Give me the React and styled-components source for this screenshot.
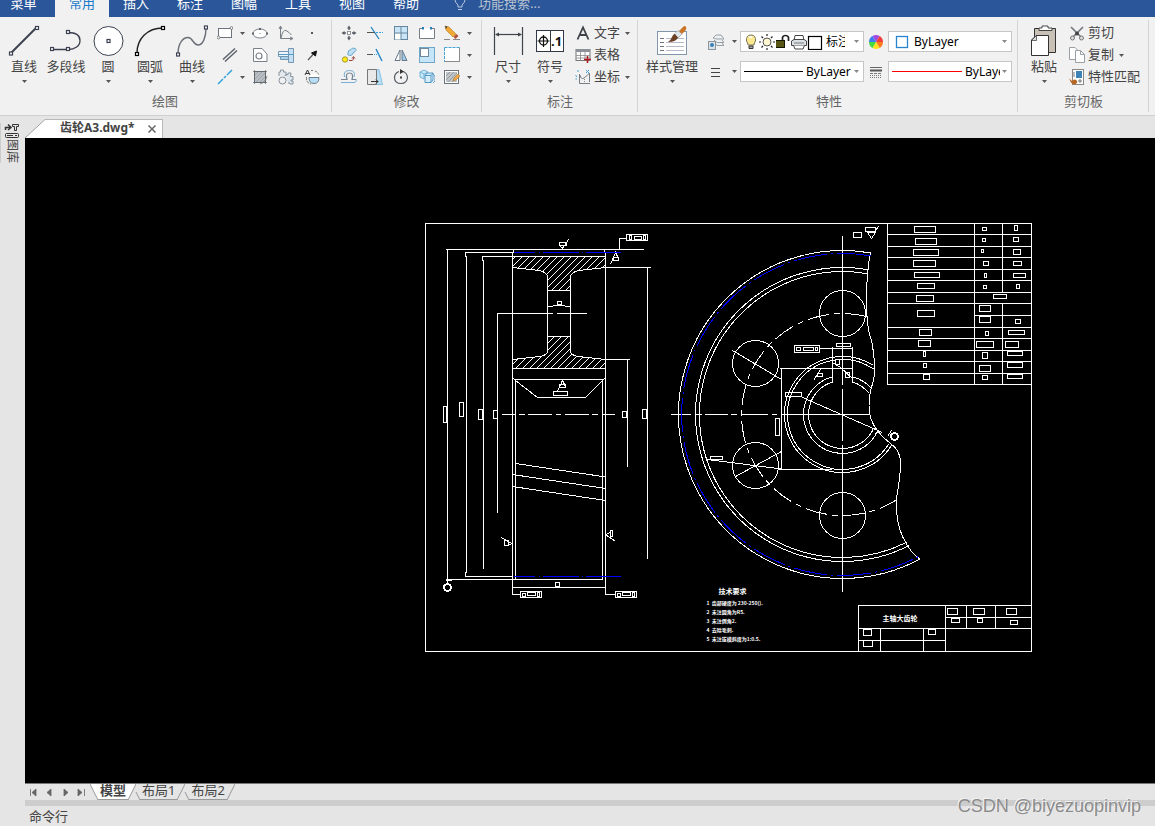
import { useState } from 'react';
import styled, { createGlobalStyle } from 'styled-components';

/* ---------- large icons, 32 x 32 ---------- */

const Node = ({ x, y, color = '#3c4150' }) => (
  <rect x={x - 1.5} y={y - 1.5} width='3' height='3' fill='#fff' stroke={color} strokeWidth='1.2' />
);

const largeIcons = {
  line: (
    <>
      <path d='M3 28L28 3' stroke='#3c4150' strokeWidth='2' />
      <Node x={3} y={28.5} />
      <Node x={29} y={3} />
    </>
  ),
  polyline: (
    <>
      <path d='M2 24.5H18C25 24.5 30 21 30 15.5S26 7.5 18 7.5' stroke='#3c4150' strokeWidth='1.3' />
      <Node x={2} y={24} />
      <Node x={18} y={24} />
      <Node x={18} y={7} />
    </>
  ),
  circle: (
    <>
      <circle cx='16.500' cy='16' r='14.5' fill='#fff' stroke='#3c4150' />
      <Node x={16.5} y={16} />
    </>
  ),
  arc: (
    <>
      <path d='M3 28C3 14 13 3 29 3' stroke='#222' strokeWidth='1.4' />
      <Node x={3} y={29} color='#000' />
      <Node x={29} y={3} color='#000' />
    </>
  ),
  curve: (
    <>
      <path d='M2 29C2 18 7 12.5 12 12.5S17 20 22 20S30 12 30 3' stroke='#6b6f78' strokeWidth='1.4' />
      <Node x={2} y={29.5} />
      <Node x={30} y={2.5} />
    </>
  ),
  dimension: (
    <>
      <path d='M2.5 2V30M30.5 2V30' stroke='#3f444c' strokeWidth='1.2' />
      <path d='M4 9.5H29' stroke='#3f444c' strokeWidth='1.2' />
      <path d='M3 9.5L7 7.5V11.5ZM30 9.5L26 7.5V11.5Z' fill='#3f444c' />
    </>
  ),
  symbol: (
    <>
      <rect x='2.5' y='5.5' width='27' height='21' fill='#fff' stroke='#333846' />
      <path d='M16.5 5V27' stroke='#333846' />
      <circle cx='9.5' cy='16' r='4' stroke='#111' strokeWidth='1.3' />
      <path d='M3.5 16H15.5M9.5 10V22' stroke='#111' strokeWidth='1.2' />
      <text x='17' y='21' fontFamily='Noto Sans' fontSize='13' fontWeight='700' fill='#111'>.1</text>
    </>
  ),
  style: (
    <>
      <rect x='1.5' y='6.5' width='29' height='23' fill='#fff' stroke='#8296ab' />
      <path d='M4 13.5H8M4 17.5H8M4 21.5H8M4 25.5H8' stroke='#6b7480' />
      <path d='M10 13.5H28M10 17.5H28M10 21.5H28M10 25.5H28' stroke='#b5bac8' />
      <path d='M18 11L27 2Q29 0 30 2Q31 4 28 7L22 13Z' fill='#c97524' />
      <path d='M18 9L22 5.500L26 9L22 13Z' fill='#dfe4e8' stroke='#8b949b' strokeWidth='.5' />
      <path d='M12 17Q15 15 16 12Q17 9 19 9L22 12.500Q20 17 12 17Z' fill='#6b4025' />
    </>
  ),
  paste: (
    <>
      <path d='M6.500 3.500H27.500V27.500H6.500Z' fill='#c9c1b5' stroke='#333' />
      <path d='M11 5.500V3H14V1H20V3H24V5.500Z' fill='#fff' stroke='#333' strokeWidth='.9' />
      <path d='M8 10.500H20.500V30.500H3.500V15Z' fill='#fff' stroke='#333' />
      <path d='M8.500 10.500V15.500H3.500Z' fill='#ddd' stroke='#333' strokeWidth='.7' />
    </>
  ),
};

/* ---------- small icons, 16 x 16 ---------- */

const smallIcons = {
  rect: (
    <>
      <rect x='1.500' y='3.500' width='13' height='9' fill='#fff' stroke='#6d737c' />
      <circle cx='14.500' cy='3' r='1.400' fill='#fff' stroke='#555' strokeWidth='.7' />
      <circle cx='1.500' cy='12.500' r='1.400' fill='#fff' stroke='#555' strokeWidth='.7' />
    </>
  ),
  ellipse: (
    <>
      <ellipse cx='8' cy='8.500' rx='7' ry='4.500' fill='#fff' stroke='#7b818a' />
      <path d='M7 3H9V5H7ZM0 7.500H2V9.500H0ZM14 7.500H16V9.500H14Z' fill='#60666e' />
      <path d='M8 8V9' stroke='#777' />
    </>
  ),
  graph: (
    <>
      <path d='M2.500 1.500V13.500H15M1 4L2.500 1L4 4M12 12L15 13.500L12 15' stroke='#777d85' />
      <path d='M3 13Q5 4 8 5.500T13.500 10' stroke='#777d85' />
    </>
  ),
  dot: <rect x='7' y='7' width='2' height='2' fill='#53575e' />,
  parallel: <path d='M1 12.500L13 1.500M3 14.500L15 3.500' stroke='#5e646c' strokeWidth='1.500' />,
  hole: (
    <>
      <path d='M1.500 1.500H10L15 7V14.500H1.500Z' fill='#fff' stroke='#7b818a' />
      <circle cx='7' cy='9' r='3' stroke='#7b818a' strokeWidth='1.200' />
    </>
  ),
  shaft: (
    <>
      <path d='M.5 4.500H10.500V9.500H.5Z' fill='#eef6fc' stroke='#7796ae' />
      <path d='M2.500 9.500H10.500V12.500H2.500Z' fill='#a8d3ef' stroke='#7796ae' />
      <path d='M10.500 1.500H15.500V15.500H10.500Z' fill='#c3e0f4' stroke='#7796ae' />
      <path d='M0 7.500H16' stroke='#579bc8' />
    </>
  ),
  arrow: (
    <>
      <path d='M4 13L9 7.500' stroke='#555' strokeWidth='1.200' />
      <path d='M12.500 4L11.500 9L7.500 6Z' fill='#111' stroke='#111' />
    </>
  ),
  blueLine: <path d='M1 15L6 10M7 9L9 7M10 6L15 1' stroke='#31a4dc' strokeWidth='1.500' />,
  hatch: (
    <>
      <rect x='2.500' y='2.500' width='11' height='11' fill='#b9bfc4' stroke='#61686f' />
      <path d='M1 2.500H15M1 13.500H15M2.500 1V15M13.500 1V15' stroke='#61686f' strokeWidth='.7' />
      <path d='M3 6L6 3M3 10L10 3M4 13L13 4M8 13L13 8' stroke='#8f979e' strokeWidth='.7' />
      <path d='M15 7Q14 13 8 15' stroke='#777' strokeWidth='.8' />
    </>
  ),
  gear: (
    <>
      <path d='M1 7V3H2.500V1H5.500V3H8V6L6.500 7' fill='#e4e9ee' stroke='#8b96a1' />
      <path d='M8 7V5.500H10V4H13V5.500H12.500V7.500H15V11H13V12H15V15H12V14H10' fill='#dce4ec' stroke='#8b96a1' />
      <circle cx='4.500' cy='11.500' r='3.500' fill='#f1f1f1' stroke='#84909b' />
    </>
  ),
  section: (
    <>
      <path d='M1 6L3.500 1L6 6M2 4.500H5' stroke='#333' />
      <path d='M7 1.500H10M11 2Q14 3 15 6' stroke='#777' strokeDasharray='2 1' />
      <circle cx='10' cy='9.500' r='5' fill='#fff' />
      <path d='M5 8.500H15Q15 14.500 10 14.500T5 8.500Z' fill='#b7def5' stroke='#6e7f8c' />
      <path d='M2.500 8Q2 14 7 15' stroke='#777' strokeDasharray='3 1' />
    </>
  ),
  move: (
    <>
      <path d='M8 2V5M8 11V14M2 8H5M11 8H14' stroke='#555b63' strokeWidth='1.400' />
      <path d='M8 .5L10 3.500H6ZM8 15.500L10 12.500H6ZM.5 8L3.500 6V10ZM15.500 8L12.500 6V10Z' fill='#555b63' />
      <rect x='6.500' y='6.500' width='3' height='3' fill='#fff' stroke='#7a8087' strokeWidth='.8' />
    </>
  ),
  trim: (
    <>
      <path d='M4 2L12 14' stroke='#1f83c4' strokeWidth='1.300' />
      <path d='M0 7.500H8' stroke='#555' />
      <path d='M9 7.500H16' stroke='#3aa0dc' strokeDasharray='2 1' />
    </>
  ),
  array: (
    <>
      <rect x='1.500' y='1.500' width='13' height='13' fill='#c8e6f8' stroke='#66869d' />
      <rect x='2' y='8.500' width='6' height='6' fill='#fff' />
      <path d='M8 1V15M1 8H15' stroke='#66869d' />
    </>
  ),
  breakIcon: (
    <>
      <path d='M4 3.500H.5V13.500H15.500V3.500H12' fill='#fff' stroke='#767d85' />
      <path d='M3 2H5V4.500H3ZM11 2H13V4.500H11Z' fill='#2580c0' />
    </>
  ),
  erase: (
    <>
      <path d='M1 1L5 2L12 9L9 12L2 5Z' fill='#f3aa35' stroke='#b07a2b' strokeWidth='.6' />
      <path d='M1 1L3.500 1.500L2 4Z' fill='#444' />
      <path d='M9.500 12L12.500 9L14.500 11L11.500 14Z' fill='#b3523c' />
      <path d='M0 14.500H6M9 14.500H16' stroke='#888' />
    </>
  ),
  copyIcon: (
    <>
      <path d='M7 6Q7 3 10 2.500Q11 0 14 1.500T12 6Q11 9 8.500 8.500T7 6Z' fill='#c0e1f5' stroke='#64a4cc' />
      <circle cx='4' cy='12.500' r='2.700' fill='#ffeb19' stroke='#8b832d' strokeWidth='.8' />
      <path d='M8 13.500H11Q13 13 12.500 10.500M11 11.500L12.500 9.500L14 11.500' stroke='#a0403a' />
    </>
  ),
  extend: (
    <>
      <path d='M9 2L15 14' stroke='#1f83c4' strokeWidth='1.400' />
      <path d='M0 7.500H6' stroke='#555' />
      <path d='M7 7.500H12' stroke='#3aa0dc' strokeDasharray='1 1' />
    </>
  ),
  mirror: (
    <>
      <path d='M7 3V13.500H2Z' fill='#fff' stroke='#687888' />
      <path d='M9 3V13.500H14Z' fill='#9dcbea' stroke='#687888' />
    </>
  ),
  scale: (
    <>
      <rect x='.5' y='.5' width='15' height='15' fill='#c5e6f9' stroke='#72a6c9' />
      <rect x='1.500' y='1.500' width='8' height='8' fill='#fff' stroke='#72889b' />
    </>
  ),
  dashRect: (
    <>
      <rect x='.5' y='.5' width='15' height='14' fill='#fff' stroke='#8b8b8b' />
      <path d='M.5 .5H15.500M.5 1V15' stroke='#f1f1f1' />
      <path d='M.5 .5H15.500M.5 1V15' stroke='#46a4da' strokeDasharray='3 1' />
    </>
  ),
  offset: (
    <>
      <path d='M0 10.500H6Q4 4 8.500 4T11 10.500H15' stroke='#778491' strokeWidth='1.200' />
      <path d='M0 13.500H14Q16 12 15 10M3.500 8Q2 1.500 8.500 1.500T13 8' stroke='#6aa6cf' strokeWidth='.9' />
    </>
  ),
  stretch: (
    <>
      <path d='M8 .5H12L15.500 15.500H8Z' fill='#b8dff4' stroke='#8ac1e2' />
      <path d='M.5 .5H9.500V15.500H.5Z' fill='#e8e8e8' stroke='#777' />
      <path d='M4 12.500H11M9 10.500L11 12.500L9 14.500' stroke='#333' />
    </>
  ),
  rotate: (
    <>
      <path d='M6 2.500Q1.500 4 1.500 9Q2 14.500 8 14.500T14.500 8.500Q14 3 9 2.500' stroke='#555b63' strokeWidth='1.200' />
      <path d='M7 0L11 2.500L7 5Z' fill='#333' />
      <rect x='7' y='7.500' width='2' height='2' fill='#444' />
    </>
  ),
  explode: (
    <>
      <path d='M1 3L5 1L9 3L5 5ZM1 3V8L5 10V5' fill='#c9e9fa' stroke='#5ba3cf' strokeWidth='.8' />
      <path d='M6 6.500H12V13.500H6ZM6 6.500L8 4H14L12 6.500M14 4V11L12 13.500' fill='#d6eefb' stroke='#418fc0' strokeWidth='.9' />
      <path d='M14 5L16 7V12L14 14' stroke='#5ba3cf' />
    </>
  ),
  hatchEdit: (
    <>
      <rect x='.5' y='1.500' width='14' height='13' fill='#fff' stroke='#6d737a' />
      <rect x='2' y='3' width='11' height='10' fill='#c1c5c8' />
      <path d='M2 7L6 3M2 11L10 3M4 13L13 4M8 13L13 8' stroke='#858c92' strokeWidth='.7' />
      <path d='M9 12L10 9L14 5L16 7L12 11Z' fill='#efaa45' stroke='#a06d27' strokeWidth='.5' />
    </>
  ),
  text: <path d='M2.500 14.500L8 2.500L13.500 14.500M4.500 10H11.500' stroke='#3f444a' strokeWidth='1.800' />,
  table: (
    <>
      <rect x='1' y='2.500' width='14' height='11' fill='#fff' stroke='#777' />
      <path d='M1 2H15V5H1Z' fill='#8c9197' />
      <path d='M1 8.500H15M1 11H15M5.500 5V14M10 5V14' stroke='#888' strokeWidth='.8' />
      <path d='M12.500 9V16M9 12.500H16' stroke='#b01c24' strokeWidth='1.600' />
    </>
  ),
  coord: (
    <>
      <path d='M4.500 5V14.500H15M5 6Q6 11 9 9T14.500 4V13' stroke='#777d84' />
      <path d='M3 1V3M11 1L14 4M14 1L11 4M.5 6L2 8M.5 10H2' stroke='#49a2d8' />
      <path d='M9.500 8V14' stroke='#888' strokeDasharray='1 1' />
    </>
  ),
  layers: (
    <>
      <path d='M5 4L8 1H13L16 5H9ZM6 6L9 8.500H16L14 6M8 10L9 11.500H16L14 9' fill='#eef1f3' stroke='#8e969d' strokeWidth='.9' />
      <rect x='.5' y='7.500' width='7' height='8' fill='#dae3ea' stroke='#8e969d' />
      <circle cx='4' cy='11' r='2' fill='#3b82b8' />
    </>
  ),
  weight: <path d='M3 4.500H12M3 8.500H12M3 12.500H12' stroke='#444' strokeWidth='1.200' />,
  bulb: (
    <>
      <path d='M5 11Q5 9 3.500 7Q3 1 8 1T12.500 7Q11 9 11 11Z' fill='#ffe990' stroke='#77735c' />
      <path d='M6 3.500Q8 2 9 4' stroke='#fff' strokeWidth='1.500' />
      <path d='M6 12V14.500H10V12Z' fill='#aaa' stroke='#333' />
    </>
  ),
  sun: (
    <>
      <circle cx='8' cy='8' r='4' fill='#fff7d2' stroke='#555' />
      <path d='M8 0V2M8 14V16M0 8H2M14 8H16M2.500 2.500L4 4M12 12L13.500 13.500M13.500 2.500L12 4M4 12L2.500 13.500' stroke='#222' strokeWidth='1.200' />
    </>
  ),
  lock: (
    <>
      <path d='M7.500 7V3.500Q8 1.500 10.500 1.500T13.500 3.500V7' stroke='#222' strokeWidth='1.700' />
      <rect x='1' y='6' width='9' height='8' fill='#151505' />
      <path d='M1 8H9M1 10H9M1 12H9' stroke='#bfb72b' strokeWidth='.8' />
    </>
  ),
  printer: (
    <>
      <path d='M3 7L4 1.500H12L13 7' fill='#fff' stroke='#444' />
      <path d='M.5 7L3 5.500H13L15.500 7V11.500H.5Z' fill='#dce1e6' stroke='#444' />
      <path d='M2.500 11.500L4 15H12L13.500 11.500' fill='#fff' stroke='#444' />
      <path d='M3 9H13' stroke='#777' />
    </>
  ),
  layerColor: <rect x='1.500' y='2.500' width='13' height='13' fill='#fff' stroke='#000' strokeWidth='1.200' />,
  blueBox: <rect x='2.500' y='2.500' width='11' height='11' fill='#fff' stroke='#2585d0' strokeWidth='1.300' />,
  wheel: (
    <>
      <path d='M8 8L4.500 2A7 7 0 0 1 11.500 2Z' fill='#a04ae0' />
      <path d='M8 8L11.500 2A7 7 0 0 1 15 8Z' fill='#f03e3e' />
      <path d='M8 8L15 8A7 7 0 0 1 11.500 14Z' fill='#ff7a1b' />
      <path d='M8 8L11.500 14A7 7 0 0 1 4.500 14Z' fill='#ffe11b' />
      <path d='M8 8L4.500 14A7 7 0 0 1 1 8Z' fill='#45da3f' />
      <path d='M8 8L1 8A7 7 0 0 1 4.500 2Z' fill='#3f7cf4' />
    </>
  ),
  lineType: (
    <>
      <path d='M2 3.500H14' stroke='#666' />
      <path d='M2 6.500H14' stroke='#555' strokeWidth='2' />
      <path d='M2 9.500H14' stroke='#777' strokeDasharray='3 1' />
      <path d='M2 11.500H14M2 13.500H14' stroke='#777' strokeDasharray='1 1' />
    </>
  ),
  cut: (
    <>
      <path d='M2 2L12 12M14 2L4 12' stroke='#747a80' strokeWidth='1.700' />
      <circle cx='3.500' cy='13' r='2' fill='#ddd' stroke='#777' />
      <circle cx='12.500' cy='13' r='2' fill='#ddd' stroke='#777' />
      <circle cx='8' cy='8.500' r='2' fill='#444' />
    </>
  ),
  copy: (
    <>
      <path d='M.5 .5H6L9.500 4V12.500H.5Z' fill='#fff' stroke='#999fa6' />
      <path d='M6.500 3.500H11.500L15.500 7.500V15.500H6.500Z' fill='#fff' stroke='#999fa6' />
      <path d='M11.500 3.500V7.500H15.500' stroke='#999fa6' />
    </>
  ),
  match: (
    <>
      <rect x='3.500' y='.5' width='11' height='15' fill='#fff' stroke='#888' />
      <rect x='7' y='2' width='6' height='7' fill='#3c83b8' />
      <path d='M5 3V8M9 12H13M11 10V14' stroke='#777' />
      <path d='M0 9.500L3 12L5 10.500Q9 11 8 14Q5 17 2 13.500Z' fill='#b86624' />
    </>
  ),
};

const Caret = () => (
  <CaretSvg viewBox='0 0 5 3' aria-hidden='true'>
    <path d='M0 0H5L2.500 3Z' />
  </CaretSvg>
);

const LargeTool = ({ icon, label, caret = true }) => (
  <LargeButton>
    <LargeIcon viewBox='0 0 32 32' fill='none' aria-hidden='true'>{largeIcons[icon]}</LargeIcon>
    <LargeLabel>{label}</LargeLabel>
    {caret && <Caret />}
  </LargeButton>
);

const Small = ({ icon }) => (
  <SmallIcon viewBox='0 0 16 16' fill='none' aria-hidden='true'>{smallIcons[icon]}</SmallIcon>
);

const IconTool = ({ icon, title, caret }) => (
  <IconButton aria-label={title} $split={caret}>
    <Small icon={icon} />
    {caret && <Caret />}
  </IconButton>
);

const TextTool = ({ icon, label, caret }) => (
  <TextButton>
    <Small icon={icon} />
    <span>{label}</span>
    {caret && <Caret />}
  </TextButton>
);

const Combo = ({ label, value, children }) => (
  <ComboBox>
    {children}
    <ComboSelect aria-label={label} defaultValue={value}>
      <option>{value}</option>
    </ComboSelect>
    <Caret />
  </ComboBox>
);

/* ---------- drawing ---------- */

const CX = 842;
const CY = 414;

const point = (r, deg) => {
  const a = (deg * Math.PI) / 180;
  return `${(CX + r * Math.cos(a)).toFixed(1)} ${(CY - r * Math.sin(a)).toFixed(1)}`;
};

// counter-clockwise arc round the gear centre
const arc = (r, from, to) =>
  `M${point(r, from)}A${r} ${r} 0 ${to - from > 180 ? 1 : 0} 0 ${point(r, to)}`;

const gearArcs = [
  arc(164, 80, 298),
  arc(147, 80, 297),
  arc(143, 80, 297),
  arc(58, 58, 328),
  arc(55, 56, 328),
  arc(39, 105, 333),
  arc(39, 43, 75),
  arc(34, 107, 337),
  arc(34, 38, 73),
].join('');

const holes = [[842, 313], [755, 363], [755, 465], [842, 515]];

// x, y, width, height of the text frames
const textFrames = [
  [443, 406, 3, 16], [459, 402, 4, 14], [478, 409, 4, 10], [493, 410, 4, 8],
  [622, 411, 4, 6], [642, 409, 4, 9], [555, 582, 4, 4], [557, 301, 4, 3],
  [520, 591, 21, 6], [522, 593, 3, 3], [527, 592, 8, 3], [537, 592, 2, 4],
  [615, 591, 21, 6], [617, 593, 3, 3], [622, 592, 8, 3], [632, 592, 2, 4],
  [626, 234, 21, 6], [629, 235, 2, 4], [634, 236, 7, 3], [643, 235, 2, 4],
  [553, 391, 14, 4], [559, 384, 6, 3], [559, 242, 7, 3], [613, 257, 5, 3],
  [504, 540, 4, 5], [610, 530, 2, 6],
  [794, 345, 25, 7], [796, 347, 4, 3], [803, 347, 10, 3], [815, 347, 2, 3],
  [836, 343, 14, 3], [785, 392, 16, 4], [775, 418, 4, 17], [710, 456, 12, 3],
  [853, 232, 8, 5], [865, 227, 10, 4], [817, 373, 5, 3], [835, 359, 4, 5], [845, 372, 4, 5],
  [914, 226, 21, 6], [915, 238, 21, 6], [913, 249, 25, 6], [913, 260, 22, 6],
  [914, 272, 25, 5], [917, 283, 17, 5], [916, 295, 17, 6], [917, 310, 17, 6],
  [919, 329, 12, 6], [918, 340, 12, 6], [923, 351, 2, 5], [923, 363, 3, 4], [923, 374, 6, 5],
  [982, 227, 4, 3], [982, 238, 3, 3], [981, 249, 2, 3], [983, 261, 5, 4], [984, 273, 2, 4],
  [983, 285, 3, 3], [993, 294, 13, 4], [979, 305, 11, 6], [979, 316, 11, 6], [985, 331, 3, 4],
  [976, 341, 17, 6], [982, 352, 5, 6], [979, 365, 11, 6], [982, 375, 5, 4],
  [1014, 225, 3, 5], [1013, 237, 5, 4], [1013, 249, 7, 5], [1013, 261, 8, 4], [1013, 273, 12, 4],
  [1016, 284, 3, 4], [1015, 319, 5, 4], [1008, 330, 16, 4], [1005, 341, 13, 6],
  [1007, 351, 15, 4], [1007, 362, 15, 5], [1007, 374, 15, 4],
  [947, 608, 10, 6], [973, 608, 11, 6], [1006, 608, 10, 6], [951, 618, 8, 4],
  [977, 618, 5, 4], [1010, 620, 7, 4], [863, 629, 8, 6], [928, 629, 7, 5], [863, 640, 9, 6],
];

const tableRows = [234, 246, 257, 269, 280, 292, 303, 327, 338, 350, 361, 373, 384];

const notes = [
  '1  齿部硬度为 230-250().',
  '2  未注圆角为R5.',
  '3  未注倒角2.',
  '4  去除毛刺.',
  '5  未注拔模斜度为1:0.5.',
];

const GearDrawing = () => (
  <DrawingSvg viewBox='24.5 137.5 1130 645' role='img' aria-label='齿轮A3'>
    <defs>
      <pattern id='hatch' x='.5' y='.5' width='7' height='7' patternUnits='userSpaceOnUse'>
        <path d='M0 6h1v1h-1zM1 5h1v1h-1zM2 4h1v1h-1zM3 3h1v1h-1zM4 2h1v1h-1zM5 1h1v1h-1zM6 0h1v1h-1z' fill='#fff' stroke='none' shapeRendering='crispEdges' />
      </pattern>
    </defs>
    <g fill='none' stroke='#fff' shapeRendering='crispEdges'>
      <rect x='425' y='223' width='606' height='428' />

      {/* side section */}
      <g fill='url(#hatch)'>
        <path d='M512 256H605V267L578 270Q570 272 570 277V290H547V277Q547 272 539 270L512 267Z' />
        <path d='M547 336H570V350Q570 355 578 356L605 359V368H512V359L539 356Q547 355 547 350Z' />
      </g>
      <path d='M445 249H643M447 249V580M464 252H513M465 252V256H466V572H465V576M464 576H512M481 256H512M482 256V260H483V568' />
      <path d='M496 313H552M556 313H586M497 313V512M601 267H650M647 267V558M605 359H629M627 359V466' />
      <path d='M512 252L514 249M605 252L603 249M512 252V594H520M605 252V594H615M547 290V336M570 290V336M547 306H551L554 305H563L566 306H570' />
      <path d='M512 378L515 379H602L605 378M515 379V579M602 379V579M515 380L537 397H585L602 380' />
      <path d='M515 463L602 476H605M512 474L605 488M512 486L605 500M445 579H602M512 587H605M445 580H451M447 580V583' />
      <path d='M501 414H515M518 414H524M527 414H551M555 414H560M564 414H588M591 414H597M601 414H614' />
      <path d='M626 238H619V249M568 239L562 248L559 245M562 249V246M610 264L615 252L618 258M557 391L562 380L565 386' />
      <path d='M501 537L511 543L508 545M615 541L605 534L610 532' />
      <circle cx='447' cy='587' r='4' />
      <circle cx='447' cy='587' r='3' />

      {/* front view */}
      <path d={gearArcs} />
      <path d={arc(101, 76, 302)} strokeDasharray='22 5 6 5' />
      {holes.map(([x, y]) => <circle key={`${x}-${y}`} cx={x} cy={y} r='23' />)}
      <path d='M870 252Q866 272 866 300T871 340Q876 366 873 380Q867 398 869 412Q871 428 890 443Q900 450 900 462Q900 476 896 498Q895 520 902 536Q910 553 920 559' />
      <path d='M670 414H690M694 414H701M704 414H727M730 414H736M740 414H767M771 414H776M780 414H869' />
      <path d='M842 235V384M842 388V440M842 444V591M832 346V381M852 346V381' />
      <path d='M781 368V469M779 368H852M778 469H831M732 350L781 379M735 476L781 451M707 459L785 469M802 397L882 432M819 348H852' />
      <path d='M887 436L891 430M878 430L874 434M867 232H875L871 238ZM878 226L873 233M813 380L820 369M832 362L840 367L852 378' />
      <circle cx='894' cy='436' r='4' />
      <circle cx='894' cy='436' r='3' />

      {/* parameter table */}
      <path d={`M887 223V384M974 223V384M1002 223V292M1002 303V384M974 315H1031${tableRows.map((y) => `M887 ${y}H1031`).join('')}`} />

      {/* title block */}
      <path d='M858 651V605H1031M858 628H1031M945 605V651M945 617H1031M966 605V628M995 605V628M858 640H945M880 628V651M923 628V651' />

      {textFrames.map(([x, y, w, h]) => (
        <rect key={`${x}-${y}`} x={x} y={y} width={w} height={h} />
      ))}

      <g stroke='#00f'>
        <path d='M513 252H534M538 252H539M542 252H578M581 252H582M585 252H620' />
        <path d='M513 576H534M538 576H539M542 576H578M581 576H582M585 576H620' />
        <path d={arc(161, 80, 298)} strokeDasharray='34 4 2 4' />
      </g>
    </g>
    <g fill='#fff'>
      <DrawingText x='718' y='593' $size={7}>技术要求</DrawingText>
      {notes.map((note, i) => (
        <DrawingText key={note} x='706' y={604 + i * 9} $size={5}>{note}</DrawingText>
      ))}
      <DrawingText x='882' y='620' $size={7}>主轴大齿轮</DrawingText>
    </g>
  </DrawingSvg>
);

const menus = ['菜单', '常用', '插入', '标注', '图幅', '工具', '视图', '帮助'];
const sheets = ['模型', '布局1', '布局2'];

const App = () => {
  const [menu, setMenu] = useState('常用');
  const [sheet, setSheet] = useState('模型');

  return (
    <>
      <GlobalStyle />
      <AppLayout>
        <MenuBar>
          {menus.map((item) => (
            <MenuButton key={item} $active={item === menu} onClick={() => setMenu(item)}>{item}</MenuButton>
          ))}
          <SearchBox>
            <svg width='12' height='18' viewBox='0 0 12 18' fill='none' stroke='#b8c7de' aria-hidden='true'>
              <path d='M4 13V11Q1 8 1 6Q1 1 6 1T11 6Q11 8 8 11V13ZM4 15.500H8' />
            </svg>
            <input aria-label='功能搜索' placeholder='功能搜索...' />
          </SearchBox>
        </MenuBar>

        <Ribbon>
          <Group $width={332} $pad={3}>
            <GroupTools>
              <LargeTool icon='line' label='直线' />
              <LargeTool icon='polyline' label='多段线' caret={false} />
              <LargeTool icon='circle' label='圆' />
              <LargeTool icon='arc' label='圆弧' />
              <LargeTool icon='curve' label='曲线' />
              <IconGrid $columns='34px 26px 26px 26px'>
                <IconTool icon='rect' title='矩形' caret />
                <IconTool icon='ellipse' title='椭圆' />
                <IconTool icon='graph' title='公式曲线' />
                <IconTool icon='dot' title='点' />
                <IconTool icon='parallel' title='平行线' />
                <IconTool icon='hole' title='轮廓' />
                <IconTool icon='shaft' title='孔/轴' />
                <IconTool icon='arrow' title='箭头' />
                <IconTool icon='blueLine' title='中心线' caret />
                <IconTool icon='hatch' title='剖面线' />
                <IconTool icon='gear' title='齿形' />
                <IconTool icon='section' title='局部放大' />
              </IconGrid>
            </GroupTools>
            <GroupLabel>绘图</GroupLabel>
          </Group>

          <Group $width={150} $pad={4}>
            <GroupTools>
              <IconGrid $columns='26px 26px 26px 26px 34px'>
                <IconTool icon='move' title='平移' />
                <IconTool icon='trim' title='裁剪' />
                <IconTool icon='array' title='阵列' />
                <IconTool icon='breakIcon' title='打断' />
                <IconTool icon='erase' title='删除' caret />
                <IconTool icon='copyIcon' title='平移复制' />
                <IconTool icon='extend' title='延伸' />
                <IconTool icon='mirror' title='镜像' />
                <IconTool icon='scale' title='缩放' />
                <IconTool icon='dashRect' title='过渡' caret />
                <IconTool icon='offset' title='等距线' />
                <IconTool icon='stretch' title='拉伸' />
                <IconTool icon='rotate' title='旋转' />
                <IconTool icon='explode' title='分解' />
                <IconTool icon='hatchEdit' title='编辑剖面线' caret />
              </IconGrid>
            </GroupTools>
            <GroupLabel>修改</GroupLabel>
          </Group>

          <Group $width={156} $pad={5}>
            <GroupTools>
              <LargeTool icon='dimension' label='尺寸' />
              <LargeTool icon='symbol' label='符号' />
              <TextTools>
                <TextTool icon='text' label='文字' caret />
                <TextTool icon='table' label='表格' />
                <TextTool icon='coord' label='坐标' caret />
              </TextTools>
            </GroupTools>
            <GroupLabel>标注</GroupLabel>
          </Group>

          <Group $width={380} $pad={7}>
            <GroupTools>
              <LargeTool icon='style' label='样式管理' />
              <PropertyGrid>
                <IconTool icon='layers' title='图层' caret />
                <Combo label='当前图层' value='标注'>
                  <LayerIcons>
                    <Small icon='bulb' />
                    <Small icon='sun' />
                    <Small icon='lock' />
                    <Small icon='printer' />
                    <Small icon='layerColor' />
                  </LayerIcons>
                </Combo>
                <IconTool icon='wheel' title='颜色' />
                <Combo label='当前颜色' value='ByLayer'>
                  <ColorIcon><Small icon='blueBox' /></ColorIcon>
                </Combo>
                <IconTool icon='weight' title='线宽' caret />
                <Combo label='当前线宽' value='ByLayer'><LineSample $width={59} $color='#000' /></Combo>
                <IconTool icon='lineType' title='线型' />
                <Combo label='当前线型' value='ByLayer'><LineSample $width={70} $color='#f00' /></Combo>
              </PropertyGrid>
            </GroupTools>
            <GroupLabel>特性</GroupLabel>
          </Group>

          <Group $width={131} $pad={5}>
            <GroupTools>
              <LargeTool icon='paste' label='粘贴' />
              <TextTools>
                <TextTool icon='cut' label='剪切' />
                <TextTool icon='copy' label='复制' caret />
                <TextTool icon='match' label='特性匹配' />
              </TextTools>
            </GroupTools>
            <GroupLabel>剪切板</GroupLabel>
          </Group>
        </Ribbon>

        <Workspace>
          <SideDock>
            <DockButton>
              <svg width='16' height='16' viewBox='0 0 16 16' fill='none' stroke='#333' aria-hidden='true'>
                <path d='M1.500 7V4.500H6M4 1.500L7 4.500L4 7' strokeWidth='1.500' />
                <path d='M8.500 1.500H14.500V3.500H12.500V7.500H10.500V3.500H8.500Z' />
                <rect x='1.500' y='10.500' width='13' height='4' rx='1' />
                <path d='M3 12.500H9M11 12.500H13' />
              </svg>
              <span>图库</span>
            </DockButton>
          </SideDock>
          <Main>
            <FileTabs>
              <svg width='20' height='19' viewBox='0 0 20 19' aria-hidden='true'>
                <path d='M0 19L20 0V19Z' fill='#fff' />
                <path d='M0 19L20 .5' stroke='#a0a0a0' />
              </svg>
              <FileTab>
                <span>齿轮A3.dwg*</span>
                <button aria-label='关闭'>
                  <svg width='8' height='8' viewBox='0 0 8 8' stroke='#666' strokeWidth='1.500' aria-hidden='true'>
                    <path d='M.5 .5L7.500 7.500M7.500 .5L.5 7.500' />
                  </svg>
                </button>
              </FileTab>
            </FileTabs>
            <Canvas><GearDrawing /></Canvas>
            <SheetBar>
              {[
                ['第一页', 'M1.500 1V8M7 1L3 4.500L7 8Z'],
                ['上一页', 'M6 1L2 4.500L6 8Z'],
                ['下一页', 'M3 1L7 4.500L3 8Z'],
                ['最后一页', 'M1 1L5 4.500L1 8ZM7.500 1V8'],
              ].map(([title, d]) => (
                <PageButton key={title} aria-label={title}>
                  <svg width='9' height='9' viewBox='0 0 9 9' fill='#666' stroke='#666' strokeWidth='.8' aria-hidden='true'><path d={d} /></svg>
                </PageButton>
              ))}
              {sheets.map((name) => (
                <SheetTab key={name} $active={name === sheet} onClick={() => setSheet(name)}>
                  <svg width='8' height='16' viewBox='0 0 8 16' aria-hidden='true'>
                    <path d='M0 0L8 16V0Z' fill={name === sheet ? '#fff' : 'none'} />
                    <path d={name === sheet ? 'M0 0L8 16' : 'M4 8L8 16'} stroke='#999' />
                  </svg>
                  <span>{name}</span>
                  <svg width='8' height='16' viewBox='0 0 8 16' aria-hidden='true'>
                    <path d='M8 0L0 16V0Z' fill={name === sheet ? '#fff' : 'none'} />
                    <path d='M8 0L0 16' stroke='#999' />
                  </svg>
                </SheetTab>
              ))}
            </SheetBar>
            <Splitter />
            <CommandBar>命令行</CommandBar>
          </Main>
        </Workspace>
        <Watermark>CSDN @biyezuopinvip</Watermark>
      </AppLayout>
    </>
  );
};

const GlobalStyle = createGlobalStyle`
  * {
    box-sizing: border-box;
  }
  body {
    margin: 0;
    background: #e5e5e5;
  }
  body, button, input, select {
    font-family: 'Noto Sans', 'Noto Sans CJK SC', sans-serif;
    font-size: 13px;
    color: #444;
  }
  button {
    margin: 0;
    padding: 0;
    border: none;
    background: none;
    white-space: nowrap;
  }
  svg {
    display: block;
    flex-shrink: 0;
  }
`;

const AppLayout = styled.div`
  position: relative;
  display: flex;
  flex-direction: column;
  height: 100vh;
  overflow: hidden;
`;

const MenuBar = styled.nav`
  display: flex;
  align-items: flex-end;
  height: 17px;
  flex-shrink: 0;
  overflow: hidden;
  background: #2b579a;
`;

const MenuButton = styled.button`
  width: 54px;
  height: 26px;
  padding-bottom: 1px;
  line-height: 25px;
  color: ${(props) => (props.$active ? '#1979ca' : '#fff')};
  background: ${(props) => (props.$active ? '#f1f1f1' : 'transparent')};

  &:first-child {
    width: 55px;
    padding-right: 8px;
  }
`;

const SearchBox = styled.label`
  display: flex;
  align-items: center;
  gap: 12px;
  height: 26px;
  padding: 0 0 2px 21px;

  input {
    width: 100px;
    height: 24px;
    padding: 0;
    border: none;
    outline: none;
    background: transparent;
  }
  input::placeholder {
    color: #b8c2d0;
  }
`;

const Ribbon = styled.section`
  display: flex;
  height: 99px;
  flex-shrink: 0;
  padding: 3px 0;
  background: #f1f1f1;
  border-bottom: 1px solid #d0d0d0;
`;

const Group = styled.div`
  display: flex;
  flex-direction: column;
  width: ${(props) => props.$width}px;
  flex-shrink: 0;
  padding: 2px 4px 0 ${(props) => props.$pad}px;
  border-right: 1px solid #d4d4d4;
`;

const GroupTools = styled.div`
  display: flex;
  height: 70px;
`;

const GroupLabel = styled.div`
  line-height: 18px;
  text-align: center;
  color: #666;
`;

const LargeButton = styled.button`
  display: flex;
  flex-direction: column;
  align-items: center;
  min-width: 42px;
  padding-top: 3px;
`;

const LargeIcon = styled.svg`
  width: 32px;
  height: 32px;
`;

const LargeLabel = styled.span`
  line-height: 18px;
  padding: 0 1px 5px;
`;

const CaretSvg = styled.svg`
  width: 5px;
  height: 3px;
  fill: #555;
`;

const SmallIcon = styled.svg`
  width: 16px;
  height: 16px;
`;

const IconGrid = styled.div`
  display: grid;
  grid-template-columns: ${(props) => props.$columns};
  grid-auto-rows: 22px;
`;

const IconButton = styled.button`
  display: flex;
  align-items: center;
  justify-content: ${(props) => (props.$split ? 'flex-start' : 'center')};
  gap: 7px;
  padding-left: ${(props) => (props.$split ? '4px' : '0')};
`;

const TextTools = styled.div`
  display: grid;
  grid-auto-rows: 22px;
  padding-left: 4px;
`;

const TextButton = styled.button`
  display: flex;
  align-items: center;
  gap: 3px;

  span {
    line-height: 18px;
    padding-bottom: 3px;
  }
  ${CaretSvg} {
    margin-left: 2px;
  }
`;

const PropertyGrid = styled.div`
  display: grid;
  grid-template-columns: 32px 124px 24px 124px;
  grid-auto-rows: 21px;
  row-gap: 9px;
  padding: 9px 0 0 9px;

  ${IconButton} {
    gap: 8px;
    padding-left: 0;
  }
`;

const ComboBox = styled.div`
  display: flex;
  align-items: center;
  min-width: 0;
  padding: 0 4px 0 2px;
  background: #fff;
  border: 1px solid #c6c6c6;

  ${CaretSvg} {
    fill: #888;
  }
`;

const ComboSelect = styled.select`
  flex: 1;
  min-width: 0;
  height: 19px;
  margin: 0 2px 0 3px;
  padding: 0;
  border: none;
  outline: none;
  appearance: none;
  background: transparent;
  color: #000;
  font-size: 12px;
`;

const LayerIcons = styled.div`
  display: flex;

  & + ${ComboSelect} {
    margin-right: 9px;
  }
`;

const ColorIcon = styled.div`
  padding: 0 1px 0 3px;
`;

const LineSample = styled.div`
  width: ${(props) => props.$width}px;
  height: 1px;
  flex-shrink: 0;
  margin-left: 1px;
  background-color: ${(props) => props.$color};
`;

const Workspace = styled.div`
  display: flex;
  flex: 1;
  min-height: 0;
`;

const SideDock = styled.aside`
  width: 25px;
  flex-shrink: 0;
  padding-top: 7px;
`;

const DockButton = styled.button`
  display: flex;
  flex-direction: column;
  align-items: center;
  width: 23px;
  border-left: 1px solid #ccc;

  span {
    font-size: 12px;
    line-height: 14px;
    padding-right: 1px;
    writing-mode: vertical-rl;
    text-orientation: sideways;
  }
`;

const Main = styled.main`
  display: flex;
  flex-direction: column;
  flex: 1;
  min-width: 0;
`;

const FileTabs = styled.div`
  display: flex;
  align-items: flex-end;
  height: 22px;
  flex-shrink: 0;
`;

const FileTab = styled.div`
  display: flex;
  align-items: center;
  gap: 13px;
  height: 19px;
  padding: 0 6px 0 15px;
  font-weight: 700;
  font-size: 12px;
  background: #fff;
  border-top: 1px solid #b8b8b8;
  border-right: 1px solid #b8b8b8;

  span {
    line-height: 16px;
    padding-bottom: 2px;
  }
`;

const Canvas = styled.div`
  flex: 1;
  min-height: 0;
  background: #000;
`;

const DrawingSvg = styled.svg`
  width: 100%;
  height: 100%;
`;

const DrawingText = styled.text`
  font-family: 'Noto Sans CJK SC', sans-serif;
  font-size: ${(props) => props.$size}px;
  font-weight: 700;
  white-space: pre;
`;

const SheetBar = styled.div`
  display: flex;
  height: 17px;
  flex-shrink: 0;
  border-top: 1px solid #777;
`;

const PageButton = styled.button`
  display: flex;
  align-items: center;
  justify-content: center;
  width: 16px;
  height: 16px;
`;

const SheetTab = styled.button`
  display: flex;
  font-weight: ${(props) => (props.$active ? 700 : 400)};

  & + & {
    margin-left: -4px;
  }
  ${PageButton} + & {
    margin-left: 1px;
  }
  span {
    height: 16px;
    line-height: 12px;
    padding: 0 2px;
    border-bottom: 1px solid #999;
    background: ${(props) => (props.$active ? '#fff' : 'transparent')};
  }
`;

const Splitter = styled.div`
  height: 6px;
  flex-shrink: 0;
  background: #cdcdcd;
`;

const CommandBar = styled.footer`
  height: 20px;
  flex-shrink: 0;
  line-height: 20px;
  padding-left: 4px;
`;

const Watermark = styled.div`
  position: absolute;
  right: 14px;
  bottom: 8px;
  font-family: 'Liberation Sans', sans-serif;
  font-size: 18px;
  line-height: 24px;
  color: #8c8c8c;
  text-shadow: -1px -1px 0 #f4f4f4;
  pointer-events: none;
`;

export default App;
